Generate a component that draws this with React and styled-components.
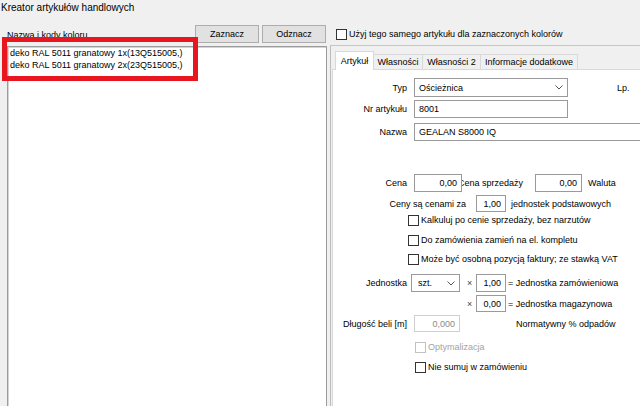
import React from 'react';
import styled, { createGlobalStyle, css } from 'styled-components';

const GlobalStyle = createGlobalStyle`
  html, body {
    margin: 0;
    padding: 0;
    background: #f0f0f0;
  }
  body {
    font-family: "Liberation Sans", Arial, sans-serif;
    font-size: 9px;
    color: #000;
  }
`;

const Window = styled.div`
  position: relative;
  width: 640px;
  height: 406px;
  overflow: hidden;
  background: #f0f0f0;
  display: flex;
  flex-direction: column;
`;

const Title = styled.div`
  height: 17px;
  line-height: 15px;
  padding-left: 1px;
  font-size: 10px;
  flex-shrink: 0;
`;

const Main = styled.div`
  flex: 1;
  display: flex;
  min-height: 0;
`;

// left side: colour list
const LeftPane = styled.div`
  width: 330px;
  flex-shrink: 0;
  display: flex;
  flex-direction: column;
`;

const LeftHeader = styled.div`
  height: 29px;
  display: flex;
  align-items: flex-start;
  padding: 0 4px 0 7px;
  flex-shrink: 0;
`;

const ListCaption = styled.div`
  flex: 1;
  margin-top: 12px;
  line-height: 12px;
`;

const Button = styled.button`
  width: 64px;
  height: 18px;
  margin-top: 8px;
  margin-left: ${p => p.$ml || 0}px;
  padding: 0;
  font-family: inherit;
  font-size: 9px;
  color: #000;
  background: #e1e1e1;
  border: 1px solid #adadad;
`;

const ListBox = styled.div`
  flex: 1;
  width: 320px;
  margin-left: 7px;
  box-sizing: border-box;
  background: #fff;
  border: 1px solid #9c9c9c;
  border-bottom: none;
  box-shadow: inset 1px 1px 0 #d4d4d4;
  padding: 0 2px;
`;

const ListItem = styled.div`
  line-height: 12px;
  white-space: nowrap;
`;

// annotation drawn over the screenshot
const Highlight = styled.div`
  position: absolute;
  left: 2px;
  top: 37px;
  width: 196px;
  height: 44px;
  box-sizing: border-box;
  border: 5px solid #e8161f;
  pointer-events: none;
`;

// right side: article editor
const RightPane = styled.div`
  flex: 1;
  display: flex;
  flex-direction: column;
  min-width: 0;
`;

const TopCheck = styled.div`
  height: 28px;
  box-sizing: border-box;
  padding: 12px 0 0 6px;
  display: flex;
  align-items: flex-start;
  line-height: 11px;
  flex-shrink: 0;
`;

const Box = styled.span`
  width: 11px;
  height: 11px;
  box-sizing: border-box;
  flex-shrink: 0;
  background: #fff;
  border: 1px solid #333;
  margin-right: 2px;

  ${p => p.$disabled && css`
    border-color: #c2c2c2;
  `}
`;

const Frame = styled.div`
  flex: 1;
  display: flex;
  flex-direction: column;
  border-top: 1px solid #c6c6c6;
  border-left: 1px solid #bdbdbd;
  padding: 5px 0 0 1px;
  min-height: 0;
`;

const TabStrip = styled.div`
  height: 18px;
  display: flex;
  align-items: flex-end;
  padding-left: 3px;
  flex-shrink: 0;
`;

const Tab = styled.div`
  width: ${p => p.$w}px;
  height: 15px;
  box-sizing: border-box;
  line-height: 15px;
  text-align: center;
  background: #f0f0f0;
  border: 1px solid #d9d9d9;
  border-bottom: none;
  margin-left: -1px;
  white-space: nowrap;

  ${p => p.$active && css`
    height: 19px;
    line-height: 19px;
    margin-bottom: -1px;
    margin-left: 0;
    background: #fff;
    position: relative;
    z-index: 1;
  `}
`;

const TabBody = styled.div`
  flex: 1;
  background: #fff;
  border: 1px solid #d9d9d9;
  border-right: none;
  border-bottom: none;
  padding-top: 8px;
  display: flex;
  flex-direction: column;
`;

const Row = styled.div`
  display: flex;
  align-items: center;
  height: ${p => p.$h || 14}px;
  margin-top: ${p => p.$mt || 0}px;
  padding-left: ${p => p.$pl || 0}px;
  white-space: nowrap;
  flex-shrink: 0;
  color: ${p => (p.$disabled ? '#a3a3a3' : '#000')};
`;

const Label = styled.span`
  width: ${p => p.$w}px;
  text-align: right;
  flex-shrink: 0;
`;

const Text = styled.span`
  margin-left: ${p => p.$ml || 0}px;
`;

// label partly hidden under the field before it
const Tucked = styled.span`
  width: ${p => p.$w}px;
  margin-left: -4px;
  flex-shrink: 0;
`;

const Times = styled.span`
  width: 9px;
  margin-left: ${p => p.$ml || 0}px;
  color: #444;
  flex-shrink: 0;
`;

const Field = styled.div`
  position: relative;
  z-index: 1;
  width: ${p => p.$w}px;
  height: 100%;
  margin-left: ${p => p.$ml || 0}px;
  box-sizing: border-box;
  flex-shrink: 0;
  display: flex;
  align-items: center;
  justify-content: ${p => (p.$right ? 'flex-end' : 'flex-start')};
  padding: 0 4px;
  background: #fff;
  border: 1px solid #9a9a9a;

  ${p => p.$disabled && css`
    border-color: #cfcfcf;
    color: #8a8a8a;
  `}
`;

const Combo = styled(Field)`
  justify-content: space-between;
  padding: 0 4px 0 ${p => p.$pad || 4}px;
`;

const Chevron = () => (
  <svg width="8" height="5" viewBox="0 0 8 5">
    <polyline points="0.5,0.5 4,4 7.5,0.5" fill="none" stroke="#555" strokeWidth="1" />
  </svg>
);

const Check = ({ children, disabled, mt }) => (
  <Row $mt={mt} $pl={disabled !== undefined ? 82 : 75} $disabled={disabled}>
    <Box $disabled={disabled} />
    {children}
  </Row>
);

const tabs = [
  { name: 'Artykuł', w: 39, active: true },
  { name: 'Własności', w: 50 },
  { name: 'Własności 2', w: 59 },
  { name: 'Informacje dodatkowe', w: 98 },
];

const colours = [
  'deko RAL 5011 granatowy 1x(13Q515005,)',
  'deko RAL 5011 granatowy 2x(23Q515005,)',
];

export default function App() {
  return (
    <>
      <GlobalStyle />
      <Window>
        <Title>Kreator artykułów handlowych</Title>
        <Main>
          <LeftPane>
            <LeftHeader>
              <ListCaption>Nazwa i kody koloru</ListCaption>
              <Button>Zaznacz</Button>
              <Button $ml={3}>Odznacz</Button>
            </LeftHeader>
            <ListBox>
              {colours.map(c => (
                <ListItem key={c}>{c}</ListItem>
              ))}
            </ListBox>
          </LeftPane>

          <RightPane>
            <TopCheck>
              <Box />
              <span>Użyj tego samego artykułu dla zaznaczonych kolorów</span>
            </TopCheck>
            <Frame>
              <TabStrip>
                {tabs.map(t => (
                  <Tab key={t.name} $w={t.w} $active={t.active}>{t.name}</Tab>
                ))}
              </TabStrip>
              <TabBody>
                <Row $h={19}>
                  <Label $w={74}>Typ</Label>
                  <Combo $w={154} $ml={7}>
                    <span>Ościeżnica</span>
                    <Chevron />
                  </Combo>
                  <Text $ml={49}>Lp.</Text>
                </Row>
                <Row $mt={3} $h={18}>
                  <Label $w={74}>Nr artykułu</Label>
                  <Field $w={154} $ml={7}>8001</Field>
                </Row>
                <Row $mt={5} $h={18}>
                  <Label $w={74}>Nazwa</Label>
                  <Field $w={250} $ml={7}>GEALAN S8000 IQ</Field>
                </Row>

                <Row $mt={33} $h={18}>
                  <Label $w={74}>Cena</Label>
                  <Field $w={48} $ml={7} $right>0,00</Field>
                  <Tucked $w={77}>Cena sprzedaży</Tucked>
                  <Field $w={47} $right>0,00</Field>
                  <Text $ml={6}>Waluta</Text>
                </Row>
                <Row $mt={3} $h={17}>
                  <Label $w={133}>Ceny są cenami za</Label>
                  <Field $w={30} $ml={10} $right>1,00</Field>
                  <Text $ml={5}>jednostek podstawowych</Text>
                </Row>

                <Check mt={1}>Kalkuluj po cenie sprzedaży, bez narzutów</Check>
                <Check mt={6}>Do zamówienia zamień na el. kompletu</Check>
                <Check mt={5}>Może być osobną pozycją faktury; ze stawką VAT</Check>

                <Row $mt={8} $h={18}>
                  <Label $w={74}>Jednostka</Label>
                  <Combo $w={49} $ml={4} $pad={6}>
                    <span>szt.</span>
                    <Chevron />
                  </Combo>
                  <Times $ml={7}>×</Times>
                  <Field $w={30} $right>1,00</Field>
                  <Text $ml={2}>= Jednostka zamówieniowa</Text>
                </Row>
                <Row $mt={3} $h={17} $pl={134}>
                  <Times>×</Times>
                  <Field $w={30} $right>0,00</Field>
                  <Text $ml={2}>= Jednostka magazynowa</Text>
                </Row>
                <Row $mt={3} $h={17}>
                  <Label $w={74}>Długość beli [m]</Label>
                  <Field $w={46} $ml={7} $right $disabled>0,000</Field>
                  <Text $ml={56}>Normatywny % odpadów</Text>
                </Row>

                <Check mt={8} disabled={true}>Optymalizacja</Check>
                <Check mt={6} disabled={false}>Nie sumuj w zamówieniu</Check>
              </TabBody>
            </Frame>
          </RightPane>
        </Main>
        <Highlight />
      </Window>
    </>
  );
}
